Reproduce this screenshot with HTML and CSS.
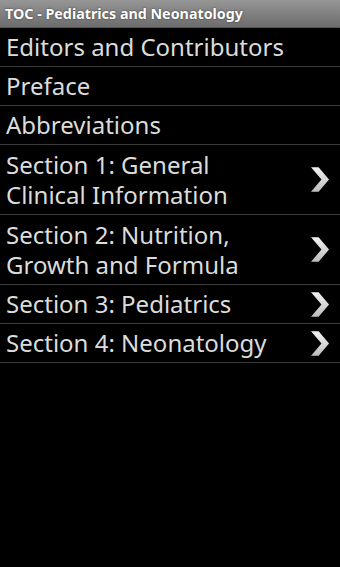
FILE: index.html
```html
<!DOCTYPE html>
<html>
<head>
<meta charset="utf-8">
<link rel="stylesheet" href="styles.css">
</head>
<body>
<div class="titlebar">TOC - Pediatrics and Neonatology</div>
<ul class="list">
  <li class="item"><span class="label">Editors and Contributors</span></li>
  <li class="item"><span class="label">Preface</span></li>
  <li class="item"><span class="label">Abbreviations</span></li>
  <li class="item tall"><span class="label">Section 1: General<br>Clinical Information</span><svg class="chev" viewBox="0 0 20 26"><defs><linearGradient id="g" x1="0" y1="0" x2="0" y2="1"><stop offset="0" stop-color="#f2f2f2"/><stop offset="1" stop-color="#bdbdbd"/></linearGradient></defs><polygon points="0,0 8,0 19,13 8,26 0,26 11,13" fill="url(#g)"/></svg></li>
  <li class="item tall"><span class="label">Section 2: Nutrition,<br>Growth and Formula</span><svg class="chev" viewBox="0 0 20 26"><polygon points="0,0 8,0 19,13 8,26 0,26 11,13" fill="url(#g)"/></svg></li>
  <li class="item"><span class="label">Section 3: Pediatrics</span><svg class="chev" viewBox="0 0 20 26"><polygon points="0,0 8,0 19,13 8,26 0,26 11,13" fill="url(#g)"/></svg></li>
  <li class="item"><span class="label">Section 4: Neonatology</span><svg class="chev" viewBox="0 0 20 26"><polygon points="0,0 8,0 19,13 8,26 0,26 11,13" fill="url(#g)"/></svg></li>
</ul>
</body>
</html>
```
FILE: styles.css
```css
html, body {
  margin: 0;
  padding: 0;
  background: #000;
  height: 100%;
}
body {
  font-family: "Noto Sans", "Open Sans", sans-serif;
  color: #e0e0e0;
}
.titlebar {
  height: 28px;
  box-sizing: border-box;
  padding-left: 5px;
  display: flex;
  align-items: center;
  background: linear-gradient(to bottom, #969696, #6c6c6c);
  border-bottom: 1px solid #555;
  color: #fff;
  font-weight: bold;
  font-size: 14.3px;
  text-shadow: 0 0 2px #333;
  white-space: nowrap;
  overflow: hidden;
}
.list {
  list-style: none;
  margin: 0;
  padding: 0;
}
.item {
  display: flex;
  align-items: center;
  justify-content: space-between;
  height: 38px;
  border-bottom: 1px solid #3a3a3a;
  padding-left: 6px;
  padding-right: 10px;
}
.item.tall {
  height: 69px;
}
.label {
  font-size: 24px;
  line-height: 30px;
  color: #dcdcdc;
}
.chev {
  width: 19px;
  height: 25px;
  flex: none;
}
```
